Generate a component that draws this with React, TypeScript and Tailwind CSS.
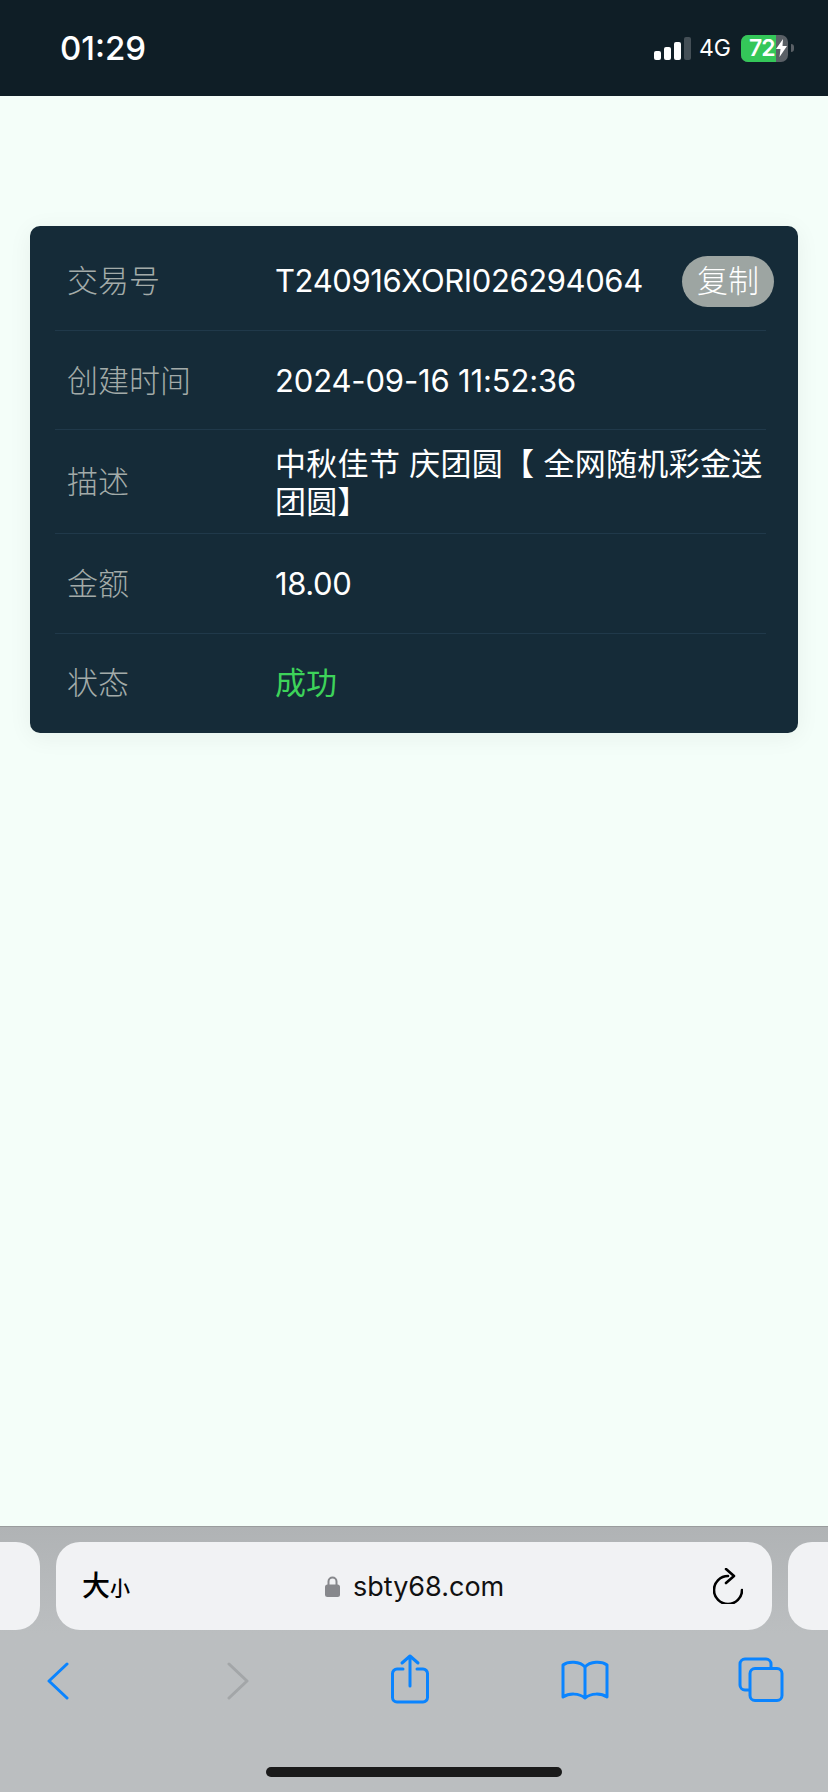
const labelClass = "w-[208px] shrink-0 text-[31px] font-light text-[#a3aba9]";
const valueClass = "text-[31px] tracking-[-0.4px] text-white";

const StatusBar = () => (
  <div className="flex h-[96px] shrink-0 items-center bg-[#0f1e26] pl-[60px] pr-[34px] text-white">
    <span className="text-[33px] font-medium leading-none">01:29</span>
    <div className="ml-auto flex items-center">
      {/* signal */}
      <div className="flex items-end gap-[3px]">
        <div className="h-[9px] w-[7px] rounded-[2px] bg-white" />
        <div className="h-[13px] w-[7px] rounded-[2px] bg-white" />
        <div className="h-[18px] w-[7px] rounded-[2px] bg-white" />
        <div className="h-[23px] w-[7px] rounded-[2px] bg-[#444f56]" />
      </div>
      <span className="ml-[8px] text-[23px] leading-none">4G</span>
      {/* battery */}
      <div className="relative ml-[10px] flex h-[27px] w-[47px] items-center overflow-hidden rounded-[7px] bg-[#5a6066]">
        <div className="absolute inset-y-0 left-0 w-[35px] bg-[#34c759]" />
        <span className="relative pl-[8px] text-[23px] font-semibold leading-none tracking-[-1px]">72</span>
        <svg className="relative ml-[1px]" width="11" height="18" viewBox="0 0 11 18">
          <path d="M7 0 L0 10 H4.5 L3.5 18 L11 7 H6.5 Z" fill="#fff" />
        </svg>
      </div>
      <div className="ml-[3px] h-[8px] w-[3px] rounded-r-full bg-[#5a6066]" />
    </div>
  </div>
);

const Toolbar = () => (
  <div className="flex h-[266px] shrink-0 flex-col overflow-hidden border-t border-[#9a9c9d] bg-gradient-to-b from-[#b0b3b5] to-[#bbbec0] to-40%">
    {/* address bar */}
    <div className="mt-[15px] flex h-[88px] gap-4">
      <div className="w-[40px] rounded-r-[24px] bg-[#f1f2f4]" />
      <div className="flex w-[716px] items-center rounded-[24px] bg-[#f1f2f4] pl-[26px] pr-[29px]">
        <span className="text-[28px] font-medium leading-none text-black">大</span>
        <span className="mt-[6px] text-[20px] font-medium leading-none text-black">小</span>
        <svg className="ml-[195px]" width="15" height="21" viewBox="0 0 15 21">
          <path d="M3.5 9 V5.5 a4 4 0 0 1 8 0 V9" fill="none" stroke="#87888c" strokeWidth="2" />
          <rect x="0" y="8.5" width="15" height="12.5" rx="2.5" fill="#87888c" />
        </svg>
        <span className="ml-[13px] text-[27px] leading-none text-[#111]">sbty68.com</span>
        <svg className="ml-auto" width="30" height="36" viewBox="0 0 30 36" fill="none" stroke="#000" strokeWidth="2.6" strokeLinecap="round" strokeLinejoin="round">
          <path d="M15 8 A14 14 0 1 0 29 22" />
          <path d="M13 1 L21 8 L13 15" />
        </svg>
      </div>
      <div className="w-[40px] rounded-l-[24px] bg-[#f1f2f4]" />
    </div>
    {/* nav icons */}
    <div className="mt-[24px] flex items-start pl-[47px]">
      <svg className="mt-[8px]" width="22" height="38" viewBox="0 0 22 38" fill="none" stroke="#0a84ff" strokeWidth="3" strokeLinecap="round" strokeLinejoin="round">
        <path d="M20 2 L2 19 L20 36" />
      </svg>
      <svg className="ml-[158px] mt-[8px]" width="22" height="38" viewBox="0 0 22 38" fill="none" stroke="#a3a6a8" strokeWidth="3" strokeLinecap="round" strokeLinejoin="round">
        <path d="M2 2 L20 19 L2 36" />
      </svg>
      <svg className="ml-[142px]" width="38" height="50" viewBox="0 0 38 50" fill="none" stroke="#0a84ff" strokeWidth="3" strokeLinecap="round" strokeLinejoin="round">
        <path d="M12 15 H6 a4.5 4.5 0 0 0 -4.5 4.5 V43.5 a4.5 4.5 0 0 0 4.5 4.5 H32 a4.5 4.5 0 0 0 4.5 -4.5 V19.5 a4.5 4.5 0 0 0 -4.5 -4.5 H26" />
        <path d="M19 32 V2 M11 9 L19 2 L27 9" />
      </svg>
      <svg className="ml-[132px] mt-[6px]" width="48" height="40" viewBox="0 0 48 40" fill="none" stroke="#0a84ff" strokeWidth="3" strokeLinecap="round" strokeLinejoin="round">
        <path d="M24 7 C19 1 7 1 2 5 V37 C8 33 18 33 24 38 C30 33 40 33 46 37 V5 C41 1 29 1 24 7 Z M24 7 V38" />
      </svg>
      <svg className="ml-[129px] mt-[3px]" width="46" height="46" viewBox="0 0 46 46" fill="none" stroke="#0a84ff" strokeWidth="3" strokeLinecap="round" strokeLinejoin="round">
        <rect x="12" y="11.5" width="32" height="32" rx="5" />
        <path d="M10.5 33 H7 a5 5 0 0 1 -5 -5 V7 a5 5 0 0 1 5 -5 H28 a5 5 0 0 1 5 5 V11" />
      </svg>
    </div>
    <div className="mx-auto mt-[63px] h-[10px] w-[296px] rounded-full bg-[#1a1a1a]" />
  </div>
);

export default function App() {
  return (
    <div className="flex h-[1792px] w-[828px] flex-col overflow-hidden bg-[#f4fef9] font-['Inter','Noto_Sans_CJK_SC',sans-serif]">
      <StatusBar />
      <main className="flex-1 px-[30px] pt-[130px]">
        {/* order detail card */}
        <div className="rounded-[10px] bg-[#152b38] pl-[25px] pr-[32px] shadow-[0_4px_24px_rgba(0,40,30,0.06)]">
          <div className="flex h-[105px] items-center border-b border-[#20394a] pl-[12px] pt-[6px]">
            <span className={labelClass}>交易号</span>
            <span className={valueClass}>T240916XORI026294064</span>
            <button className="-mr-[8px] ml-auto flex h-[51px] w-[92px] items-center justify-center rounded-[26px] bg-[#9da5a2] text-[31px] font-light text-white">
              复制
            </button>
          </div>
          <div className="flex h-[99px] items-center border-b border-[#20394a] pl-[12px] pt-[2px]">
            <span className={labelClass}>创建时间</span>
            <span className="text-[31px] tracking-[-0.15px] text-white">2024-09-16 11:52:36</span>
          </div>
          <div className="flex h-[104px] items-center border-b border-[#20394a] pl-[12px] pt-[2px]">
            <span className={labelClass}>描述</span>
            <span className="text-[31px] leading-[38px] tracking-[0.3px] text-white">中秋佳节 庆团圆【 全网随机彩金送团圆】</span>
          </div>
          <div className="flex h-[100px] items-center border-b border-[#20394a] pl-[12px] pt-[2px]">
            <span className={labelClass}>金额</span>
            <span className={valueClass}>18.00</span>
          </div>
          <div className="flex h-[99px] items-center pl-[12px]">
            <span className={labelClass}>状态</span>
            <span className="text-[31px] text-[#3dd35a]">成功</span>
          </div>
        </div>
      </main>
      <Toolbar />
    </div>
  );
}
